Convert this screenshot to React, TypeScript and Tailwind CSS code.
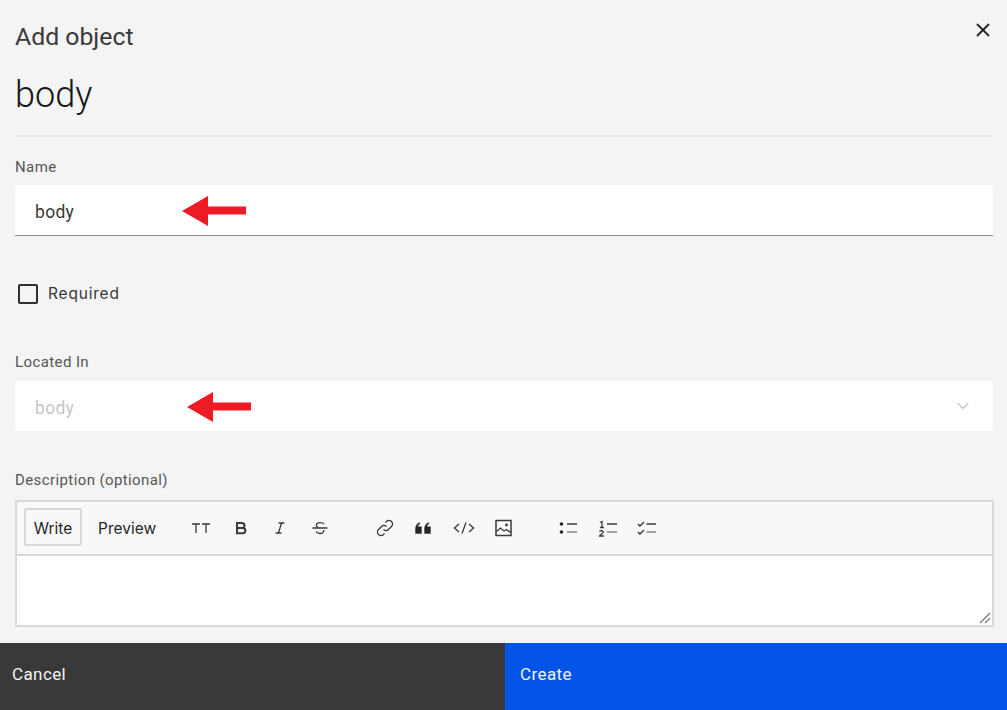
import { X, ChevronDown } from "lucide-react";

function RedArrow() {
  return (
    <svg width="66" height="32" viewBox="0 0 66 32" className="absolute top-1/2 -translate-y-1/2">
      <path d="M1 16 L27 1 V11.5 H65 V19.5 H27 V31 Z" fill="#ed1c24" />
    </svg>
  );
}

function ToolIcon({ children }: { children: React.ReactNode }) {
  return (
    <svg width="24" height="24" viewBox="0 0 24 24" fill="none" stroke="#393939" strokeWidth="1.3" className="shrink-0">
      {children}
    </svg>
  );
}

export default function App() {
  return (
    <div className="flex h-[710px] w-[1007px] flex-col overflow-hidden bg-[#f4f4f4] font-['Roboto',sans-serif] text-[#161616]">
      <div className="flex-1 px-[15px]">
        {/* Header */}
        <div className="relative h-[137px] border-b-2 border-[#e6e6e6]">
          <h2 className="pt-[21px] text-[24.8px] leading-[32px] text-[#393939]">Add object</h2>
          <h1 className="mt-[19px] text-[36px] font-light leading-[46px] text-[#161616]">body</h1>
          <X className="absolute right-[-2px] top-[19px] h-[22px] w-[22px] text-[#262626]" strokeWidth={2} />
        </div>

        {/* Name */}
        <label className="mt-[21px] block text-[15px] leading-[18px] tracking-[0.4px] text-[#565656]">Name</label>
        <div className="relative mt-[9px] flex h-[51px] w-[978px] items-center border-b border-[#8a8a8a] bg-white pl-5 pt-1 text-[17.5px] tracking-[0.3px] text-[#393939]">
          body
          <div className="absolute left-[166px] top-[10px] h-[32px] w-[66px]"><RedArrow /></div>
        </div>

        {/* Required */}
        <div className="mt-[47px] flex h-[21px] items-center pl-[3px]">
          <span className="h-[20px] w-[20px] rounded-[2px] border-2 border-[#2f2f2f]" />
          <span className="ml-[10px] font-['Inter',sans-serif] text-[15.5px] tracking-[0.8px] text-[#393939]">Required</span>
        </div>

        {/* Located In */}
        <label className="mt-[49px] block text-[15px] leading-[18px] tracking-[0.4px] text-[#565656]">Located In</label>
        <div className="relative mt-[10px] flex h-[50px] w-[978px] items-center justify-between bg-white pl-5 pr-[20px] text-[17.5px] tracking-[0.3px] text-[#c6c6c6]">
          <span className="pt-1">body</span>
          <ChevronDown className="h-[20px] w-[20px] text-[#c6c6c6]" strokeWidth={1.5} />
          <div className="absolute left-[171px] top-[10px] h-[32px] w-[66px]"><RedArrow /></div>
        </div>

        {/* Description */}
        <label className="mt-[40px] block text-[15px] leading-[18px] tracking-[0.4px] text-[#565656]">Description (optional)</label>
        <div className="mt-[11px] h-[127px] w-[979px] border-2 border-[#d8d8d8] bg-white">
          <div className="flex h-[54px] items-center border-b-2 border-[#d8d8d8] bg-[#f8f8f8] pl-[7px] font-['Inter',sans-serif] text-[#262626]">
            <span className="mb-[2px] flex h-[38px] w-[58px] items-center justify-center rounded-[2px] border-2 border-[#d8d8d8] pt-[3px] text-[15.5px]">Write</span>
            <span className="ml-[16px] pt-[1px] text-[15.5px]">Preview</span>
            <div className="ml-[33px] flex items-center gap-[15.5px]">
              <ToolIcon>
                <path d="M3 8h8M7 8v9M13 8h8M17 8v9" />
              </ToolIcon>
              <ToolIcon>
                <path d="M8 7h5a2.5 2.5 0 0 1 0 5H8zM8 12h5.8a2.6 2.6 0 0 1 0 5.2H8z" strokeWidth="2" />
              </ToolIcon>
              <ToolIcon>
                <path d="M10.5 7h6M7.5 17h6M13.5 7l-3 10" />
              </ToolIcon>
              <ToolIcon>
                <path d="M4.5 12h15M16 8.2C15 7 13.6 6.6 12 6.6c-2 0-3.6 1-3.6 2.700 0 1.200.8 2 2 2.700M15.800 14c0 2.200-1.700 3.500-3.800 3.500-1.700 0-3.100-.6-4.100-1.800" />
              </ToolIcon>
            </div>
            <div className="ml-[41px] flex items-center gap-[15.5px]">
              <ToolIcon>
                <path d="M10.500 13.500a3.500 3.500 0 0 0 5 0l3-3a3.500 3.500 0 0 0-5-5l-1 1" />
                <path d="M13.500 10.500a3.500 3.500 0 0 0-5 0l-3 3a3.500 3.500 0 0 0 5 5l1-1" />
              </ToolIcon>
              <ToolIcon>
                <path d="M3.500 17.500v-4.500c0-3 1.500-5.500 4-6.500l.5 1c-1.300.9-2 2-2.100 3.300h3.600v6.700zM12.500 17.500v-4.500c0-3 1.500-5.500 4-6.500l.5 1c-1.300.9-2 2-2.100 3.300h3.600v6.700z" fill="#262626" strokeWidth="0.5" />
              </ToolIcon>
              <ToolIcon>
                <path d="M7 8l-4.500 4 4.500 4M17 8l4.500 4-4.500 4M14 6.500l-4 11" />
              </ToolIcon>
              <ToolIcon>
                <rect x="5" y="4.500" width="15" height="15" strokeWidth="1.500" />
                <circle cx="15.500" cy="9" r="1.400" fill="#393939" stroke="none" />
                <path d="M5.500 15.500l4-3.500 3.500 3 2.500-1.500 4 3" />
              </ToolIcon>
            </div>
            <div className="ml-[41px] flex items-center gap-[15.5px]">
              <ToolIcon>
                <circle cx="5.500" cy="8" r="1.800" fill="#262626" stroke="none" />
                <circle cx="5.500" cy="16" r="1.800" fill="#262626" stroke="none" />
                <path d="M11 8h10" strokeWidth="1.500" />
                <path d="M11 16h10" strokeWidth="0.900" />
              </ToolIcon>
              <ToolIcon>
                <path d="M4 6.500l2-1v6M3.800 11.500h4.200M3.500 15.500c.8-1.200 3.800-1 3.800.6 0 1.400-3.500 2.300-3.700 3.900h4.200" strokeWidth="1.300" />
                <path d="M11 8h10" strokeWidth="1.500" />
                <path d="M11 16h10" strokeWidth="0.900" />
              </ToolIcon>
              <ToolIcon>
                <path d="M3 8l2 2 4-4M3 16l2 2 4-4" strokeWidth="1.400" />
                <path d="M11.500 8h9.500" strokeWidth="1.500" />
                <path d="M11.500 16h9.500" strokeWidth="0.900" />
              </ToolIcon>
            </div>
          </div>
          <div className="relative h-[69px]">
            <svg width="12" height="12" viewBox="0 0 12 12" className="absolute bottom-[1px] right-[1px]" stroke="#777" strokeWidth="1.300">
              <path d="M1 11L11 1M6 11l5-5" />
            </svg>
          </div>
        </div>
      </div>

      {/* Footer */}
      <div className="flex h-[67px] shrink-0 text-[17px] tracking-[0.4px] text-[#f4f4f4]">
        <div className="w-[505px] bg-[#393939] pl-3 pt-[19px]">Cancel</div>
        <div className="flex-1 bg-[#0353e9] pl-[15px] pt-[19px]">Create</div>
      </div>
    </div>
  );
}
